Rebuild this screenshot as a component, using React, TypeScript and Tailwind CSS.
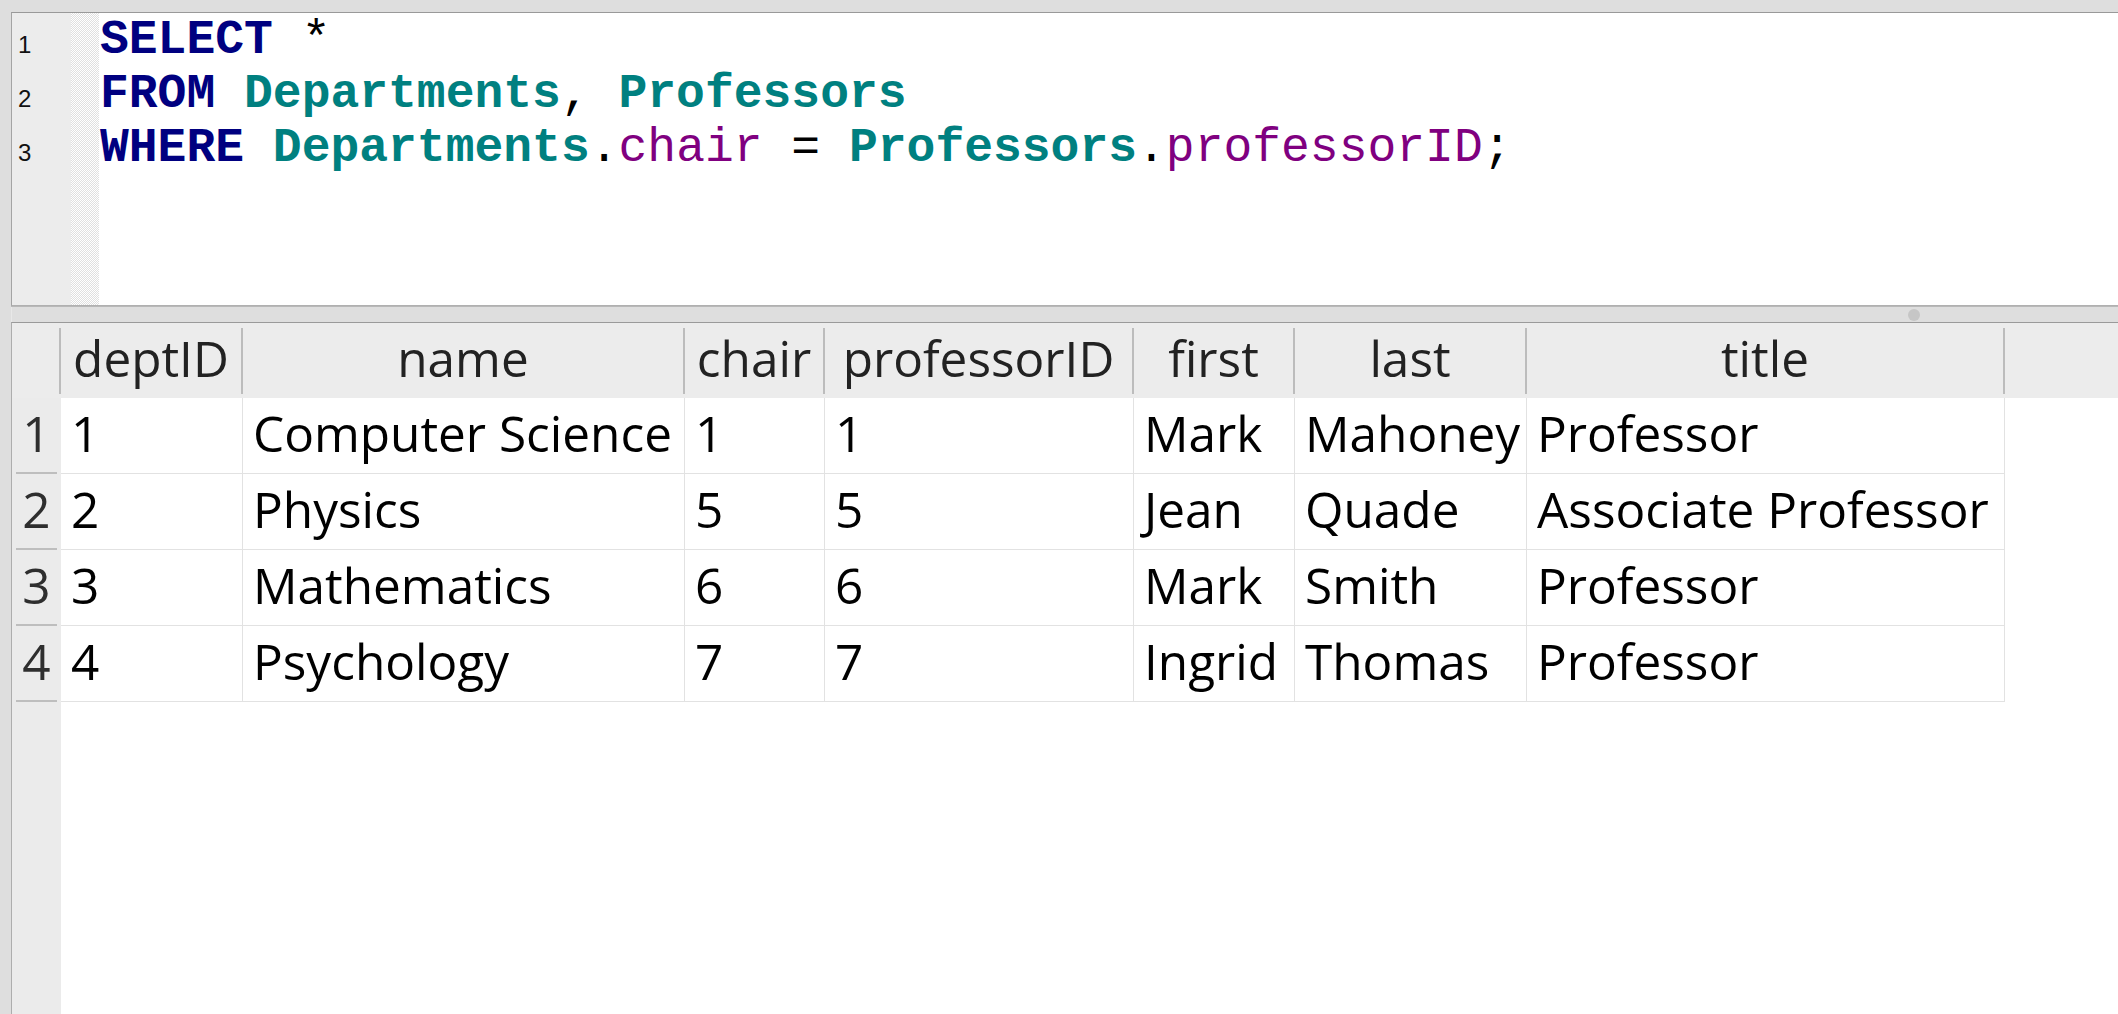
import React from 'react';

const columns = [
  { name: 'deptID', width: 'w-[182px]' },
  { name: 'name', width: 'w-[442px]' },
  { name: 'chair', width: 'w-[140px]' },
  { name: 'professorID', width: 'w-[309px]' },
  { name: 'first', width: 'w-[161px]' },
  { name: 'last', width: 'w-[232px]' },
  { name: 'title', width: 'w-[478px]' },
];

const rows = [
  ['1', 'Computer Science', '1', '1', 'Mark', 'Mahoney', 'Professor'],
  ['2', 'Physics', '5', '5', 'Jean', 'Quade', 'Associate Professor'],
  ['3', 'Mathematics', '6', '6', 'Mark', 'Smith', 'Professor'],
  ['4', 'Psychology', '7', '7', 'Ingrid', 'Thomas', 'Professor'],
];

const Kw: React.FC<{ children: React.ReactNode }> = ({ children }) => (
  <span className="font-bold text-[#000080]">{children}</span>
);
const Tbl: React.FC<{ children: React.ReactNode }> = ({ children }) => (
  <span className="font-bold text-[#008080]">{children}</span>
);
const Col: React.FC<{ children: React.ReactNode }> = ({ children }) => (
  <span className="text-[#800080]">{children}</span>
);

const Editor: React.FC = () => {
  return (
    <div className="flex h-[294px] border-t border-b border-l border-t-[#999999] border-b-[#b0b0b0] border-l-[#a4a4a4] bg-white">
      <div className="w-[59px] bg-[#ececec] pt-[5px] pl-[6px] font-['Liberation_Sans',Arial,sans-serif] text-[24px] text-[#111]">
        {[1, 2, 3].map((n) => (
          <div key={n} className="leading-[54px]">
            {n}
          </div>
        ))}
      </div>
      <div className="w-[28px] bg-[repeating-conic-gradient(#e0e0e0_0%_25%,#ffffff_0%_50%)] bg-[length:2px_2px]" />
      <div className="flex-1 pl-[1px] font-['Liberation_Mono','Courier_New',monospace] text-[48px] leading-[54px] text-black whitespace-pre">
        <div>
          <Kw>SELECT</Kw> *
        </div>
        <div>
          <Kw>FROM</Kw> <Tbl>Departments</Tbl>, <Tbl>Professors</Tbl>
        </div>
        <div>
          <Kw>WHERE</Kw> <Tbl>Departments</Tbl>.<Col>chair</Col> = <Tbl>Professors</Tbl>.<Col>professorID</Col>;
        </div>
      </div>
    </div>
  );
};

const Splitter: React.FC = () => (
  <div className="flex h-[16px] items-center border-t border-[#b8b8b8] pl-[1897px]">
    <div className="h-[12px] w-[12px] rounded-full bg-[#c6c6c6]" />
  </div>
);

const ResultTable: React.FC = () => {
  return (
    <div className="flex flex-1 flex-col border-t border-l border-t-[#9a9a9a] border-l-[#adadad] bg-white font-['Open_Sans',sans-serif] text-[49.5px] leading-none">
      <div className="flex h-[75px] bg-[#ececec] text-[#222]">
        <div className="flex w-[49px] items-center justify-end">
          <div className="h-[66px] w-[2px] bg-[#bcbcbc]" />
        </div>
        {columns.map((c) => (
          <div key={c.name} className={`flex ${c.width} items-center`}>
            <div className="flex-1 pb-[4px] text-center">{c.name}</div>
            <div className="h-[66px] w-[2px] bg-[#bcbcbc]" />
          </div>
        ))}
      </div>

      {rows.map((r, i) => (
        <div key={i} className="flex h-[76px]">
          <div className="flex w-[49px] flex-col bg-[#ebebeb]">
            <div className="flex flex-1 items-center justify-center pb-[2px] text-[#2e2e2e]">{i + 1}</div>
            <div className="mx-[4px] h-[2px] bg-[#bebebe]" />
          </div>
          {r.map((v, j) => (
            <div
              key={j}
              className={`flex ${columns[j].width} items-center border-r border-b border-[#e2e2e2] pb-[3px] pl-[10px] text-black whitespace-nowrap`}
            >
              {v}
            </div>
          ))}
        </div>
      ))}

      <div className="flex flex-1">
        <div className="w-[49px] bg-[#ebebeb]" />
        <div className="flex-1 bg-white" />
      </div>
    </div>
  );
};

const App: React.FC = () => {
  return (
    <div className="flex h-[1014px] w-[2118px] flex-col overflow-hidden bg-[#dedede]">
      <div className="h-[12px]" />
      <div className="flex flex-1">
        <div className="w-[12px] border-r border-[#e8e8e8] mr-[-1px]" />
        <div className="flex flex-1 flex-col">
          <Editor />
          <Splitter />
          <ResultTable />
        </div>
      </div>
    </div>
  );
};

export default App;
